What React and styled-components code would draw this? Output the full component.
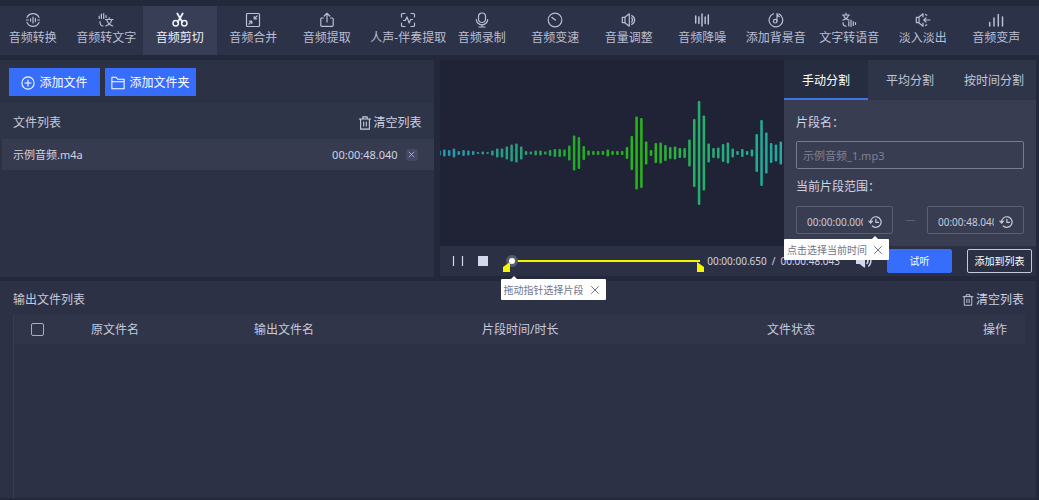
import React, { useState } from 'react'
import styled, { createGlobalStyle } from 'styled-components'

const GlobalStyle = createGlobalStyle`
    * {
        box-sizing: border-box;
    }
    body {
        margin: 0;
        background: #23283b;
        color: #c6cadb;
        font-family: "Noto Sans", "Noto Sans CJK SC", sans-serif;
        font-size: 12px;
        line-height: 16px;
    }
    button, input {
        font-family: inherit;
        font-size: inherit;
        line-height: inherit;
        color: inherit;
        margin: 0;
    }
    button {
        border: none;
        padding: 0;
        background: none;
        cursor: pointer;
    }
`;

const Page = styled.div`
    min-height: 100vh;
    display: flex;
    flex-direction: column;
    padding: 6px 0 2px;
    overflow: hidden;
`;

const Toolbar = styled.nav`
    display: flex;
    height: 49px;
    margin-left: -4px;
    padding-right: 6px;
    background: #2c3247;
`;

const ToolButton = styled.button`
    flex: 1 1 0;
    min-width: 0;
    padding-left: ${(p) => (p.$wide ? '8px' : '0')};
    display: flex;
    flex-direction: column;
    align-items: center;
    padding-top: 6px;
    gap: 2px;
    white-space: nowrap;
    color: ${(p) => (p.$active ? '#eef0fa' : '#b9bfd4')};
    background: ${(p) => (p.$active ? '#373e56' : 'transparent')};
`;

const Icon = styled.svg`
    flex: none;
    width: ${(p) => p.$size || 16}px;
    height: ${(p) => p.$size || 16}px;
    fill: none;
    stroke: currentColor;
    stroke-width: 1.2;
    stroke-linecap: round;
    stroke-linejoin: round;
`;

const Workspace = styled.main`
    display: flex;
    gap: 6px;
    margin: 5px 3px 4px 0;
    height: 217px;
`;

const FilePanel = styled.section`
    flex: 434 1 0;
    background: #2d3145;
`;

const AddBar = styled.div`
    display: flex;
    gap: 5px;
    padding: 8px 9px 7px;
`;

const AddButton = styled.button`
    width: 91px;
    height: 28px;
    display: flex;
    align-items: center;
    justify-content: center;
    gap: 4px;
    padding-top: 2px;
    white-space: nowrap;
    color: #fff;
    background: #366dfa;
`;

const ListHead = styled.div`
    display: flex;
    align-items: center;
    justify-content: space-between;
    height: 36px;
    padding: 3px 12px 0 13px;
    background: #2f3549;
`;

const Heading = styled.h2`
    margin: 0;
    font-size: 12px;
    font-weight: 400;
`;

const ClearButton = styled.button`
    display: flex;
    align-items: center;
    gap: 2px;
    color: #ccd0e0;
`;

const FileRow = styled.div`
    display: flex;
    align-items: center;
    height: 31px;
    margin-left: 2px;
    padding: 0 16px 0 11px;
    font-size: 11px;
    color: #d0d3e2;
    background: #363b50;
`;

const FileName = styled.span`
    flex: 1;
`;

const RemoveButton = styled.button`
    display: flex;
    align-items: center;
    justify-content: center;
    width: 12px;
    height: 12px;
    margin-left: 8px;
    border-radius: 3px;
    background: #444a66;
`;

const EditPanel = styled.section`
    flex: 597 1 0;
    min-width: 0;
    display: flex;
    flex-direction: column;
`;

const EditTop = styled.div`
    display: flex;
    height: 186px;
`;

const WaveArea = styled.div`
    flex: 1;
    min-width: 0;
    background: #202336;
`;

const Wave = styled.svg`
    display: block;
    width: 100%;
    height: 186px;
`;

const SplitPanel = styled.div`
    flex: none;
    width: 252px;
    background: #393d52;
`;

const Tabs = styled.div`
    display: flex;
    background: #2f3549;
`;

const Tab = styled.button`
    flex: 1;
    height: 40px;
    padding-top: 4px;
    border-bottom: 2px solid ${(p) => (p.$active ? '#4174e6' : 'transparent')};
    color: ${(p) => (p.$active ? '#fff' : '#c0c5d8')};
    background: ${(p) => (p.$active ? '#272d40' : 'transparent')};
`;

const SplitForm = styled.form`
    padding: 15px 12px 0;
`;

const FieldLabel = styled.label`
    display: block;
    color: #d0d3e2;
`;

const NameInput = styled.input`
    display: block;
    width: 100%;
    height: 28px;
    margin: 10px 0;
    padding: 0 6px;
    font-size: 11px;
    border: 1px solid #777c92;
    border-radius: 2px;
    background: transparent;
    outline: none;
    &::placeholder {
        color: #7d8196;
        opacity: 1;
    }
`;

const RangeRow = styled.div`
    display: flex;
    align-items: center;
    justify-content: space-between;
    margin-top: 11px;
`;

const TimeField = styled.div`
    position: relative;
    display: flex;
    align-items: center;
    justify-content: space-between;
    width: 97px;
    height: 28px;
    padding: 4px 10px 0;
    border: 1px solid #5b6077;
    border-radius: 2px;
`;

const TimeInput = styled.input`
    width: 56px;
    padding: 0;
    font-size: 10px;
    border: none;
    background: transparent;
    outline: none;
`;

const Dash = styled.span`
    width: 9px;
    height: 1px;
    background: #5b6077;
`;

const Tip = styled.div`
    position: absolute;
    z-index: 2;
    left: ${(p) => p.$left}px;
    top: ${(p) => p.$top}px;
    display: flex;
    align-items: center;
    justify-content: space-between;
    width: 105px;
    height: 21px;
    padding: 0 6px 0 3px;
    border-radius: 1px;
    font-size: 10px;
    white-space: nowrap;
    color: #70758a;
    background: #fff;
    &::before {
        content: '';
        position: absolute;
        top: -3px;
        left: ${(p) => p.$arrow}px;
        border: 3px solid transparent;
        border-top: none;
        border-bottom-color: #fff;
    }
`;

const TipClose = styled.button`
    display: flex;
`;

const PlayerBar = styled.div`
    display: flex;
    align-items: center;
    height: 30px;
    padding: 0 4px 0 12px;
    background: #2c3044;
`;

const PlayerButton = styled.button`
    display: flex;
    margin-right: ${(p) => p.$gap}px;
    color: #d5d8ea;
`;

const Seek = styled.div`
    position: relative;
    flex: 1;
    min-width: 0;
    display: flex;
    height: 30px;
    align-items: center;
`;

const SeekInput = styled.input`
    appearance: none;
    width: 100%;
    height: 12px;
    background: linear-gradient(#f4f500, #f4f500) 6px 50% / calc(100% - 6px) 2px no-repeat;
    outline: none;
    &::-webkit-slider-thumb {
        appearance: none;
        width: 12px;
        height: 12px;
        border: 3px solid #565a6e;
        border-radius: 50%;
        background: #fff;
    }
`;

const Marker = styled.svg`
    position: absolute;
    top: 16px;
    left: ${(p) => (p.$end ? 'auto' : '-3px')};
    right: ${(p) => (p.$end ? '-4px' : 'auto')};
    width: 7px;
    height: 10px;
    fill: #f4f500;
`;

const Times = styled.div`
    display: flex;
    gap: 5px;
    margin: 0 16px 0 7px;
    font-size: 10px;
    white-space: nowrap;
    color: #d0d3e2;
`;

const ActionButton = styled.button`
    width: 65px;
    height: 24px;
    font-size: 10px;
    color: #fff;
    border: 1px solid ${(p) => (p.$primary ? '#366dfa' : '#c6cadb')};
    border-radius: 2px;
    background: ${(p) => (p.$primary ? '#366dfa' : 'transparent')};
    & + & {
        margin-left: 15px;
    }
`;

const OutputPanel = styled.section`
    flex: 1;
    display: flex;
    flex-direction: column;
    margin-right: 3px;
    padding: 0 12px 0 13px;
    background: #2d3145;
`;

const OutputHead = styled.div`
    display: flex;
    align-items: center;
    justify-content: space-between;
    height: 34px;
    padding-top: 3px;
`;

const TableBox = styled.div`
    flex: 1;
    border-left: 1px solid #383d52;
`;

const Table = styled.table`
    width: 100%;
    table-layout: fixed;
    border-collapse: collapse;
    th {
        height: 29px;
        padding: 0;
        font-weight: 400;
        text-align: left;
        white-space: nowrap;
        background: #30354a;
    }
`;

const Check = styled.input`
    appearance: none;
    display: block;
    width: 13px;
    height: 13px;
    margin-left: 17px;
    border: 1px solid #a9aec2;
    border-radius: 2px;
    &:checked {
        background: #366dfa;
    }
`;

const tools = [
    {
        name: '音频转换',
        icon: <><path d="M2 5.500a6.600 6.600 0 0 1 12 0M14 10.500a6.600 6.600 0 0 1-12 0M1.400 8h2M12.600 8h2M5.600 6.800v2.400M8 5v6M10.400 6.300v3.400" /></>,
    },
    {
        name: '音频转文字',
        icon: <><path d="M1.200 4v2.500M3.400 2v4.500M5.700 1.500v5M8 3.500v2M2 9.500c0 3 1 4.500 3 4.500M7.500 7.500h7.500M11.200 5.700v1.800M13.800 7.700c-.8 3-3 5.300-6 6.300M8.700 7.700c.8 3 3 5.300 6 6.300" /></>,
    },
    {
        name: '音频剪切',
        icon: <><path d="M5.300 1.500l5 8.500M10.700 1.500l-5 8.500" strokeWidth="1.800" /><circle cx="3.700" cy="11.300" r="2.700" strokeWidth="1.500" /><circle cx="12.300" cy="11.300" r="2.700" strokeWidth="1.500" /></>,
    },
    {
        name: '音频合并',
        icon: <><rect x="1.500" y="1.500" width="13" height="13" rx="1" /><path d="M12 4L9.300 6.700M9.200 4.400v2.400h2.400M4 12l2.700-2.700M6.800 11.600V9.200H4.400" /></>,
    },
    {
        name: '音频提取',
        icon: <><path d="M4.500 6H2.800a1 1 0 0 0-1 1v6.300a1 1 0 0 0 1 1h10.400a1 1 0 0 0 1-1V7a1 1 0 0 0-1-1h-1.700M8 10V1.500M5.200 4L8 1.300 10.800 4" /></>,
    },
    {
        name: '人声-伴奏提取',
        wide: true,
        icon: <><path d="M1.500 5V2.500a1 1 0 0 1 1-1H5M11 1.500h2.500a1 1 0 0 1 1 1V5M14.500 11v2.500a1 1 0 0 1-1 1H11M5 14.500H2.500a1 1 0 0 1-1-1V11M3.500 8.500h1.800l1.700-3.500 2.200 6 1.500-3.500h1.800" /></>,
    },
    {
        name: '音频录制',
        icon: <><rect x="4.500" y="1" width="7" height="9.500" rx="3.500" /><path d="M2.300 7.500a5.700 5.300 0 0 0 11.400 0M8 13v2M5 15h6" /></>,
    },
    {
        name: '音频变速',
        icon: <><circle cx="8" cy="8" r="6.800" /><path d="M5 5.500L8.300 8" strokeWidth="1.500" /></>,
    },
    {
        name: '音量调整',
        icon: <><path d="M1.300 5.300v5.400h2.500l4.500 3.500V1.800L3.800 5.300zM4 5.500v5M10.700 6a3 3 0 0 1 0 4M10.700 3.600c4 2 4 6.800 0 8.800" /></>,
    },
    {
        name: '音频降噪',
        icon: <><path d="M1.700 4v7M4.900 5v6.500M8 2v12M11.200 5v6.500M14.300 3v9" strokeWidth="1.500" /></>,
    },
    {
        name: '添加背景音',
        icon: <><path d="M5.500 1.700a6.800 6.800 0 1 0 5.300.2" /><circle cx="7.200" cy="9.200" r="1.800" /><path d="M9 9.200V1.500c0 2 1 2.700 2.300 3.300" /></>,
    },
    {
        name: '文字转语音',
        icon: <><path d="M1.500 3h7M5 1.200V3M7.500 3.200C6.800 6 4.500 7.500 2 8.200M2.500 3.200c.8 2.800 3 4.300 5.500 5M2 10.500c0 2.500 1 3.700 3 3.700M7.800 9.500v4.500M10 8v6.500M12.300 9.500v4M14.500 10.500v2" /></>,
    },
    {
        name: '淡入淡出',
        icon: <><path d="M1.300 5.300v5.400h2.500L8 14.200v-3M8 4.800v-3L3.800 5.300h-2.500M4 5.500v5M9 8h6M11 5.800L8.800 8l2.200 2.200M10.500 2.500l1.300.8M10.500 13.500l1.300-.8" /></>,
    },
    {
        name: '音频变声',
        icon: <><path d="M1.700 10.500V14M6 6v8M10.300 2.500V14M14.500 5v9" strokeWidth="1.500" /></>,
    },
]

// 每根波形条的高度
const levels = [
    5, 7, 6, 9, 4, 6, 5, 4, 2, 3, 2, 5, 9, 9, 13, 17, 19, 13, 4, 3, 5, 5, 3, 6,
    8, 8, 7, 15, 35, 32, 14, 5, 4, 4, 4, 7, 4, 4, 4, 12, 34, 73, 70, 23, 6, 20,
    21, 16, 12, 13, 10, 10, 27, 68, 104, 75, 19, 10, 11, 18, 21, 9, 4, 8, 4, 7,
    38, 66, 41, 20, 17, 23,
]

const splitTabs = ['手动分割', '平均分割', '按时间分割']

const columns = [
    { name: '', width: 77 },
    { name: '原文件名', width: 163 },
    { name: '输出文件名', width: 228 },
    { name: '片段时间/时长', width: 285 },
    { name: '文件状态', width: 216 },
    { name: '操作', width: 42 },
]

function Waveform() {
    return (
        <Wave viewBox="0 0 344 186" preserveAspectRatio="xMidYMid slice" role="img" aria-label="波形">
            <defs>
                <linearGradient id="wave" gradientUnits="userSpaceOnUse" x1="0" y1="0" x2="344" y2="0">
                    <stop offset="0" stopColor="#2796b4" />
                    <stop offset="0.22" stopColor="#26a07e" />
                    <stop offset="0.38" stopColor="#22aa2c" />
                    <stop offset="0.6" stopColor="#27b81a" />
                    <stop offset="0.76" stopColor="#24b06c" />
                    <stop offset="1" stopColor="#20aaa4" />
                </linearGradient>
            </defs>
            <g fill="url(#wave)">
                {levels.map((h, i) => (
                    <rect key={i} x={i * 4.8 - 1.7} y={93 - h / 2} width="2.5" height={h} rx="1" />
                ))}
            </g>
        </Wave>
    )
}

function CloseIcon({ size }) {
    return (
        <Icon $size={size} viewBox="0 0 10 10"><path d="M1.500 1.500l7 7M8.500 1.500l-7 7" strokeWidth="1" /></Icon>
    )
}

function TrashIcon({ size }) {
    return (
        <Icon $size={size} viewBox="0 0 16 16">
            <path d="M1.500 3.500h13M5.500 3.500V1h5v2.500M3 3.500V15h10V3.500M6.500 7v4.500M9.500 7v4.500" />
        </Icon>
    )
}

function HistoryIcon() {
    return (
        <Icon $size={14} viewBox="0 0 16 16">
            <path d="M3 8a6 6 0 1 1 2 4.500M1 7l2 2.200L5 7M9 5v3.500h3" strokeWidth="1.400" />
        </Icon>
    )
}

function App() {
    const [tool, setTool] = useState('音频剪切')
    const [tab, setTab] = useState('手动分割')
    const [name, setName] = useState('')
    const [start, setStart] = useState('00:00:00.000')
    const [end, setEnd] = useState('00:00:48.040')
    const [seek, setSeek] = useState(0)
    const [seekTip, setSeekTip] = useState(true)
    const [timeTip, setTimeTip] = useState(true)

    return (
        <Page>
            <GlobalStyle />
            <Toolbar>
                {tools.map((t) => (
                    <ToolButton key={t.name} $wide={t.wide} $active={t.name === tool} onClick={() => setTool(t.name)}>
                        <Icon viewBox="0 0 16 16">{t.icon}</Icon>
                        {t.name}
                    </ToolButton>
                ))}
            </Toolbar>

            <Workspace>
                <FilePanel>
                    <AddBar>
                        <AddButton>
                            <Icon $size={14} viewBox="0 0 16 16"><circle cx="8" cy="8" r="7" /><path d="M8 4.500v7M4.500 8h7" /></Icon>
                            添加文件
                        </AddButton>
                        <AddButton>
                            <Icon $size={14} viewBox="0 0 16 16"><path d="M1 14.500V1.500h5l1.500 2.200H15v10.800zM1 6.500h14" /></Icon>
                            添加文件夹
                        </AddButton>
                    </AddBar>
                    <ListHead>
                        <Heading>文件列表</Heading>
                        <ClearButton><TrashIcon size={14} />清空列表</ClearButton>
                    </ListHead>
                    <FileRow>
                        <FileName>示例音频.m4a</FileName>
                        00:00:48.040
                        <RemoveButton aria-label="移除"><CloseIcon size={7} /></RemoveButton>
                    </FileRow>
                </FilePanel>

                <EditPanel>
                    <EditTop>
                        <WaveArea><Waveform /></WaveArea>
                        <SplitPanel>
                            <Tabs>
                                {splitTabs.map((t) => (
                                    <Tab key={t} $active={t === tab} onClick={() => setTab(t)}>{t}</Tab>
                                ))}
                            </Tabs>
                            <SplitForm onSubmit={(e) => e.preventDefault()}>
                                <FieldLabel htmlFor="name">片段名：</FieldLabel>
                                <NameInput
                                    id="name"
                                    placeholder="示例音频_1.mp3"
                                    value={name}
                                    onChange={(e) => setName(e.target.value)} />
                                <FieldLabel htmlFor="start">当前片段范围：</FieldLabel>
                                <RangeRow>
                                    <TimeField>
                                        <TimeInput id="start" value={start} onChange={(e) => setStart(e.target.value)} />
                                        <HistoryIcon />
                                        {timeTip && (
                                            <Tip $left={-13} $top={32} $arrow={88}>
                                                点击选择当前时间
                                                <TipClose type="button" aria-label="关闭" onClick={() => setTimeTip(false)}><CloseIcon size={10} /></TipClose>
                                            </Tip>
                                        )}
                                    </TimeField>
                                    <Dash />
                                    <TimeField>
                                        <TimeInput aria-label="结束时间" value={end} onChange={(e) => setEnd(e.target.value)} />
                                        <HistoryIcon />
                                    </TimeField>
                                </RangeRow>
                            </SplitForm>
                        </SplitPanel>
                    </EditTop>

                    <PlayerBar>
                        <PlayerButton $gap={13} aria-label="暂停">
                            <Icon $size={12} viewBox="0 0 12 12"><path d="M1.500 1v10M10.500 1v10" strokeLinecap="butt" /></Icon>
                        </PlayerButton>
                        <PlayerButton $gap={17} aria-label="停止">
                            <Icon $size={12} viewBox="0 0 12 12"><rect x="1" y="1" width="10" height="10" fill="currentColor" stroke="none" /></Icon>
                        </PlayerButton>
                        <Seek>
                            <SeekInput
                                type="range"
                                aria-label="播放进度"
                                value={seek}
                                onChange={(e) => setSeek(Number(e.target.value))} />
                            <Marker viewBox="0 0 7 10"><path d="M7 0v10H0V5z" /></Marker>
                            <Marker $end viewBox="0 0 7 10"><path d="M0 0v10h7V5z" /></Marker>
                            {seekTip && (
                                <Tip $left={-5} $top={33} $arrow={10}>
                                    拖动指针选择片段
                                    <TipClose aria-label="关闭" onClick={() => setSeekTip(false)}><CloseIcon size={10} /></TipClose>
                                </Tip>
                            )}
                        </Seek>
                        <Times>
                            <span>00:00:00.650</span>
                            <span>/</span>
                            <span>00:00:48.043</span>
                        </Times>
                        <PlayerButton $gap={15} aria-label="音量">
                            <Icon viewBox="0 0 16 16">
                                <path d="M0.500 5.500v5H4l4.500 3.500V2L4 5.500z" fill="currentColor" />
                                <path d="M11 5.500a4 4 0 0 1 0 5M12.800 3a7 7 0 0 1 0 10" strokeWidth="1.500" />
                            </Icon>
                        </PlayerButton>
                        <ActionButton $primary>试听</ActionButton>
                        <ActionButton>添加到列表</ActionButton>
                    </PlayerBar>
                </EditPanel>
            </Workspace>

            <OutputPanel>
                <OutputHead>
                    <Heading>输出文件列表</Heading>
                    <ClearButton><TrashIcon size={12} />清空列表</ClearButton>
                </OutputHead>
                <TableBox>
                    <Table>
                        <colgroup>
                            {columns.map((c) => <col key={c.name} width={c.width} />)}
                        </colgroup>
                        <thead>
                            <tr>
                                {columns.map((c) => (
                                    <th key={c.name}>{c.name || <Check type="checkbox" aria-label="全选" />}</th>
                                ))}
                            </tr>
                        </thead>
                    </Table>
                </TableBox>
            </OutputPanel>
        </Page>
    )
}

export default App
